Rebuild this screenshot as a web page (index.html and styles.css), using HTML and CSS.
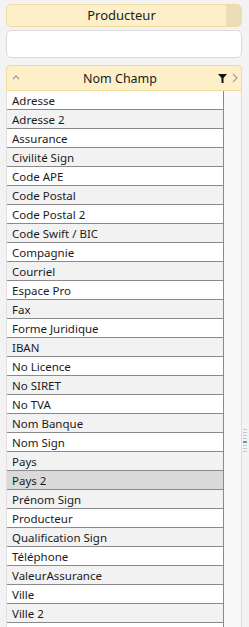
FILE: index.html
```html
<!DOCTYPE html>
<html lang="fr">
<head>
  <meta charset="UTF-8">
  <title>Producteur - Nom Champ</title>
  <link rel="stylesheet" href="styles.css">
</head>
<body>

<div class="page">
  <div class="pill">
    <span class="pill-label">Producteur</span>
    <span class="pill-btn"></span>
  </div>

  <div class="search"></div>

  <div class="panel">
    <div class="panel-head">
      <svg class="chev" width="8" height="6" viewBox="0 0 8 6"><path d="M1 5 L4 2 L7 5" fill="none" stroke="#a0a0a0" stroke-width="1.3"/></svg>
      <span class="head-title">Nom Champ</span>
      <svg class="funnel" width="9" height="9" viewBox="0 0 9 9"><path d="M0 0 H9 L5.5 4 V9 H3.5 V4 Z" fill="#111"/></svg>
      <svg class="next" width="6" height="10" viewBox="0 0 6 10"><path d="M1 1 L5 5 L1 9" fill="none" stroke="#a0a0a0" stroke-width="1.2"/></svg>
    </div>
    <div class="panel-body">
      <div class="liste" id="liste"></div>
      <div class="gouttiere"></div>
    </div>
    <div class="scroll-thumb">
      <i></i><i></i><i></i><i></i><i class="actif"></i><i></i><i></i><i></i>
    </div>
  </div>
</div>

<script>
  const champs = ['Adresse', 'Adresse 2', 'Assurance', 'Civilité Sign', 'Code APE', 'Code Postal',
    'Code Postal 2', 'Code Swift / BIC', 'Compagnie', 'Courriel', 'Espace Pro', 'Fax',
    'Forme Juridique', 'IBAN', 'No Licence', 'No SIRET', 'No TVA', 'Nom Banque', 'Nom Sign',
    'Pays', 'Pays 2', 'Prénom Sign', 'Producteur', 'Qualification Sign', 'Téléphone',
    'ValeurAssurance', 'Ville', 'Ville 2', ''];

  const liste = document.getElementById('liste');
  champs.forEach((c, i) => {
    const row = document.createElement('div');
    row.className = 'ligne' + (i % 2 ? ' alt' : '') + (c === 'Pays 2' ? ' sel' : '');
    row.textContent = c;
    liste.appendChild(row);
  });
</script>

</body>
</html>
```

FILE: styles.css
```css
body {
  margin: 0;
  background: #f3f3f3;
  font-family: "Noto Sans", "Open Sans", sans-serif;
  font-size: 11.5px;
  color: #1b1b1b;
  overflow: hidden;
}

.page {
  padding: 4px 7px 0 6px;
}

.pill {
  display: flex;
  height: 21px;
  background: #fdf0c9;
  border: 1px solid #f0dc9f;
  border-radius: 5px;
  overflow: hidden;
}

.pill-label {
  flex: 1;
  text-align: center;
  line-height: 21px;
  font-size: 13px;
  padding-left: 10px;
}

.pill-btn {
  width: 15px;
  background: #e9dcb6;
}

.search {
  margin-top: 3px;
  height: 26px;
  background: #fff;
  border: 1px solid #d9d9d9;
  border-radius: 5px;
}

.panel {
  position: relative;
  margin-top: 7px;
}

.panel-head {
  display: flex;
  align-items: center;
  height: 24px;
  background: #fdf0c9;
  border: 1px solid #f0dc9f;
  border-radius: 4px 4px 0 0;
  padding: 0 3px 0 5px;
}

.chev {
  margin-top: -2px;
}

.head-title {
  flex: 1;
  text-align: center;
  font-size: 12.5px;
  padding-left: 2px;
}

.funnel {
  margin-right: 5px;
}

.panel-body {
  display: flex;
}

.liste {
  width: 216px;
  background: #fff;
  border-right: 1px solid #8a8a8a;
  border-left: 1px solid #e0e0e0;
}

.ligne {
  height: 18px;
  line-height: 19px;
  padding-left: 5px;
  border-bottom: 1px solid #8a8a8a;
  background: #fff;
  white-space: nowrap;
}

.ligne.alt {
  background: #f2f2f2;
}

.ligne.sel {
  background: #dadada;
}

.gouttiere {
  flex: 1;
  border-right: 1px solid #dcdcdc;
  background: #f9f9f9;
}

.scroll-thumb {
  position: absolute;
  right: -5px;
  top: 364px;
  display: flex;
  flex-direction: column;
  gap: 2px;
}

.scroll-thumb i {
  display: block;
  width: 4px;
  height: 1px;
  background: #c8c8c8;
}

.scroll-thumb i.actif {
  background: #4aa0c8;
  height: 2px;
}
```
